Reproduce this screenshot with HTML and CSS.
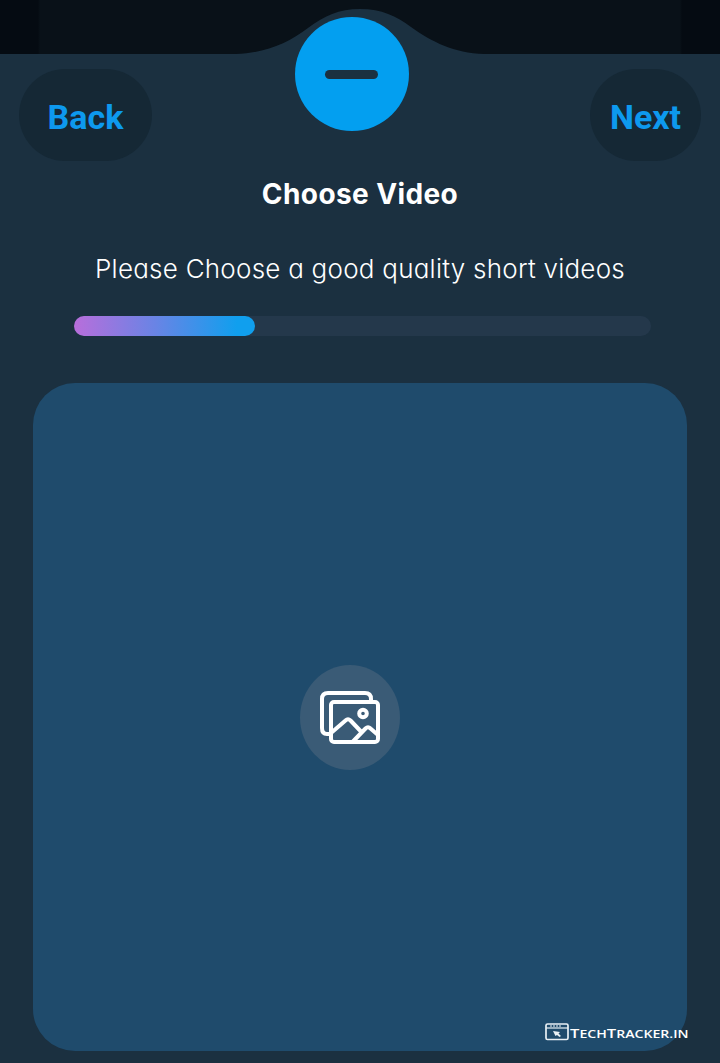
FILE: index.html
```html
<!DOCTYPE html>
<html lang="en">
<head>
<meta charset="utf-8">
<meta name="viewport" content="width=device-width">
<title>Choose Video</title>
<link rel="stylesheet" href="styles.css">
</head>
<body>
<main class="screen">
  <div class="backdrop">
    <svg class="wave" width="720" height="54" viewBox="0 0 720 54" aria-hidden="true">
      <path d="M236 54C266 53 288 43 308 28C324 16 339 9 360 9C382 9 396 16 411 27C432 42 454 53 484 54Z" fill="#1b3040"/>
    </svg>
  </div>
  <nav class="toolbar">
    <button class="pill back">Back</button>
    <button class="collapse" aria-label="Collapse"><span class="dash"></span></button>
    <button class="pill next">Next</button>
  </nav>
  <h1 class="title">Choose Video</h1>
  <p class="hint">Please Choose a good quality short videos</p>
  <div class="track"><div class="fill"></div></div>
  <section class="picker">
    <button class="gallery" aria-label="Choose from gallery">
      <svg width="62" height="56" viewBox="0 0 62 56" fill="none" stroke="#fff" stroke-width="4" stroke-linejoin="round" aria-hidden="true">
        <path d="M11 45H8Q3 45 3 39V10Q3 4 9 4H46Q52 4 52 10V12"/>
        <rect x="12" y="13" width="47" height="40" rx="3"/>
        <path d="M12 44L26.500 31.500Q29 29 31.500 31.500L41.500 42M33.500 53L46.500 39.500Q49 37 51.500 39.500L59 46"/>
        <circle cx="44" cy="24.500" r="3.800"/>
      </svg>
    </button>
  </section>
  <footer class="brand">
    <svg width="24" height="18" viewBox="0 0 24 18" fill="none" stroke="#e8f0f5" aria-hidden="true">
      <rect x="1" y="1" width="22" height="15.500" rx="1.500" stroke-width="1.700"/>
      <path d="M1 5H23" stroke-width="1.200"/>
      <path d="M5 3H17" stroke-width="1" stroke-dasharray="2 1"/>
      <path d="M8 8L15 9L13.500 10.500L16 13L14.500 14L12 12L10.500 13Z" fill="#e8f0f5" stroke="none"/>
    </svg>
    <span class="brand-text"><span class="cap">T</span>ECH<span class="cap">T</span>RACKER.IN</span>
  </footer>
</main>
</body>
</html>
```
FILE: styles.css
```css
* { box-sizing: border-box; }
body { margin: 0; background: #1b3040; }
button { border: 0; padding: 0; margin: 0; }
.screen {
  position: relative;
  display: flex;
  flex-direction: column;
  width: 720px;
  height: 1063px;
  overflow: hidden;
  background: #1b3040;
  color: #fff;
  font-family: Inter, sans-serif;
}
.backdrop {
  flex: none;
  height: 54px;
  background: linear-gradient(90deg, #050b12 0 38px, #091118 40px 680px, #050b12 682px);
}
.wave { display: block; }
.toolbar {
  flex: none;
  display: flex;
  justify-content: space-between;
  height: 107px;
  padding: 15px 19px 0;
}
.pill {
  height: 92px;
  border-radius: 46px;
  background: #152835;
  color: #0d99ee;
  font: 700 34px/97px Roboto, sans-serif;
}
.back { width: 133px; }
.next { width: 111px; }
.collapse {
  display: flex;
  align-items: center;
  justify-content: center;
  width: 114px;
  height: 114px;
  margin: -52px 39px 0 0;
  border-radius: 50%;
  background: #039ff0;
}
.dash { width: 53px; height: 9px; border-radius: 4.5px; background: #1b3040; }
.title, .hint { font-feature-settings: "cv11"; white-space: nowrap; }
.title {
  flex: none;
  margin: 13px 0 0;
  height: 40px;
  text-align: center;
  font-size: 28px;
  line-height: 40px;
  font-weight: 700;
  letter-spacing: 0.4px;
}
.hint {
  flex: none;
  margin: 35px 0 0;
  height: 40px;
  text-align: center;
  font-size: 26px;
  line-height: 40px;
  font-weight: 350;
  letter-spacing: 0.24px;
}
.track {
  flex: none;
  width: 577px;
  height: 20px;
  margin: 27px 0 0 74px;
  border-radius: 10px;
  background: #24384b;
}
.fill {
  width: 181px;
  height: 20px;
  border-radius: 10px;
  background: linear-gradient(90deg, #b86edb, #6984e5 45%, #109fee 90%);
}
.picker {
  flex: none;
  display: flex;
  align-items: center;
  justify-content: center;
  width: 654px;
  height: 668px;
  margin: 47px 0 0 33px;
  padding-right: 20px;
  border-radius: 42px;
  background: #1f4b6c;
}
.gallery {
  display: flex;
  align-items: center;
  justify-content: center;
  width: 100px;
  height: 105px;
  border-radius: 50%;
  background: #3a5b76;
}
.brand {
  position: absolute;
  left: 545px;
  top: 1022px;
  display: flex;
  align-items: center;
  gap: 1px;
  height: 20px;
}
.brand-text {
  font: 600 11px/20px "Open Sans", sans-serif;
  transform: translateY(1px) scaleX(1.28);
  transform-origin: left;
  white-space: nowrap;
}
.cap { font-size: 13px; }
```
